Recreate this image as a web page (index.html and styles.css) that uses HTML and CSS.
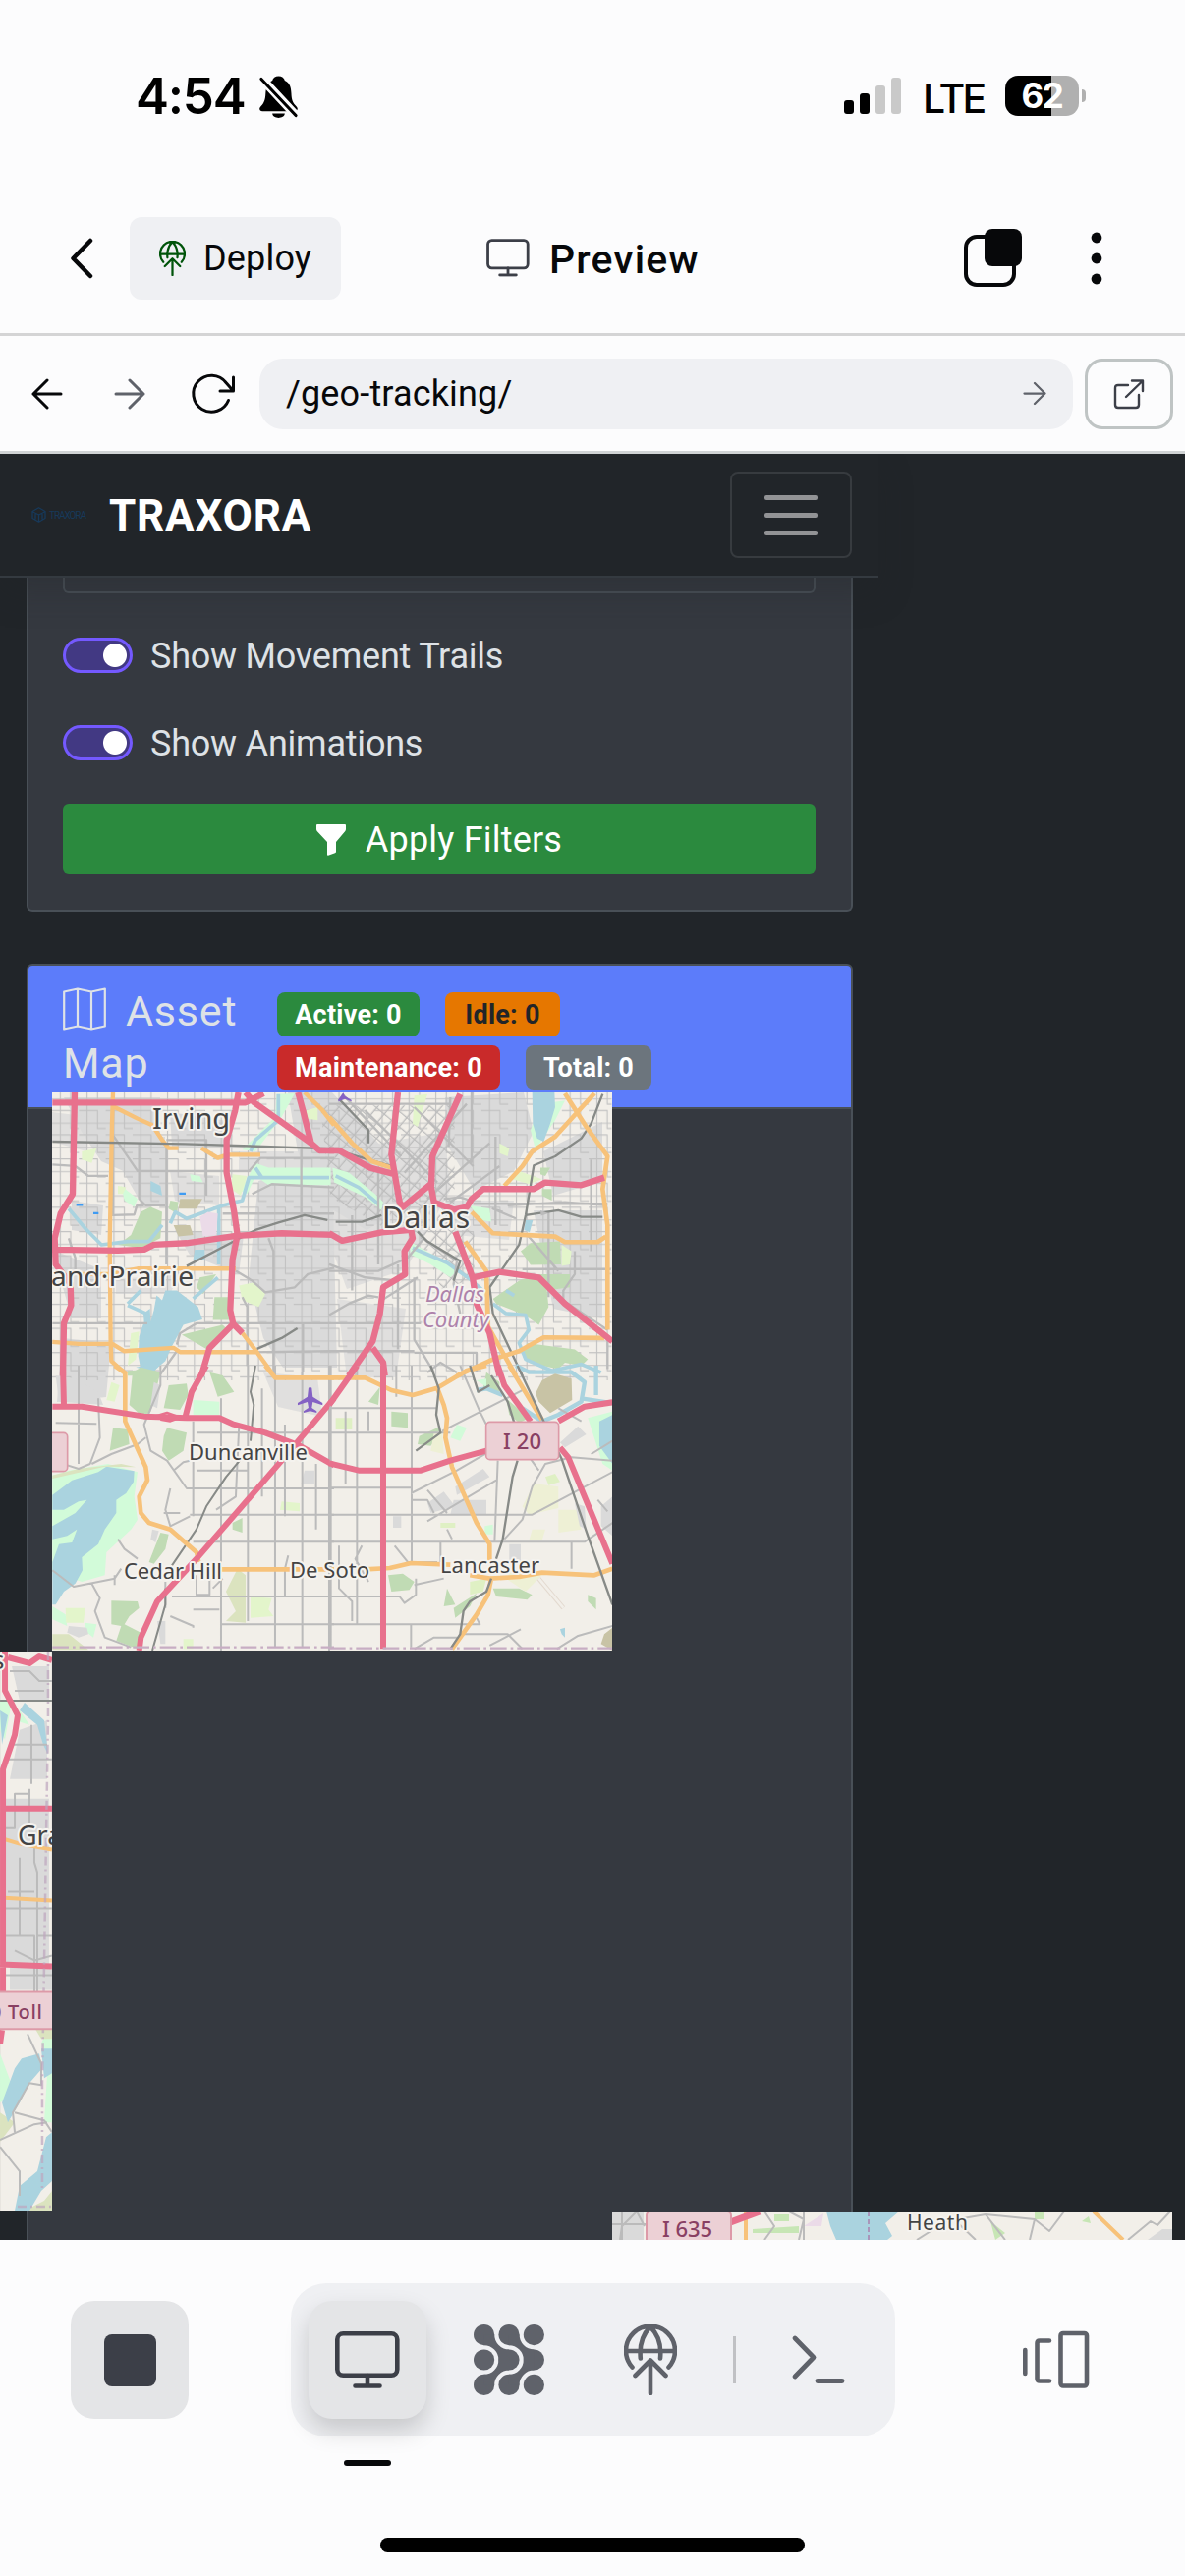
FILE: index.html
```html
<!DOCTYPE html>
<html lang="en">
<head>
<meta charset="utf-8">
<title>Preview</title>
<link rel="stylesheet" href="styles.css">
</head>
<body>
<svg class="defs" width="0" height="0" aria-hidden="true">
  <defs>
    <symbol id="monitor" viewBox="0 0 66 58"><rect x="2.3" y="2.3" width="61" height="42.500" rx="6"/><path d="M33 45v10M20.500 55.500h25" /></symbol>
    <symbol id="deploy" viewBox="0 0 54 72"><path d="M8.500 43.500A25 25 0 1 1 45.500 43.500M2 27h50M16.800 34.500Q15 14 26.800 2.500Q39 14 37 34.500M27 70V36.500M11.500 52 27 36.500 42.500 52"/></symbol>
    <symbol id="arrow" viewBox="0 0 32 32"><path d="M2 16h28M16 2l14 14-14 14"/></symbol>
    <pattern id="streets" width="82" height="74" patternUnits="userSpaceOnUse"><path d="M0 20H82M25 0V74M57 0V36H82M0 55H57V74" fill="none" stroke="#c2c2c2" stroke-width="3.500"/></pattern>
    <pattern id="diagonal" width="30" height="36" patternUnits="userSpaceOnUse" patternTransform="rotate(40)"><path d="M0 10H30M10 0V36" fill="none" stroke="#bdbdbd" stroke-width="4"/></pattern>
  </defs>
</svg>

<header class="statusbar">
  <div class="clock">4:54</div>
  <svg class="bell" viewBox="0 0 40 44"><path d="M20 0c-3.500 0-6 2-6.500 4.500C8 7 7 12 6.500 18c-.4 7-1.500 10-5 13.500C-1 34 .5 36.500 3 36.500h34c2.500 0 4-2.500 1.500-5C34.500 28 33.500 24 33.300 18 33 12 32 7 26.500 4.500 26 2 23.500 0 20 0zM13.500 39h13c-.5 6-12.500 6-13 0z"/><path d="M-1-1 42 45" stroke="#fcfcfd" stroke-width="9"/><path d="M2 3 38 41" stroke="#000" stroke-width="3.200" stroke-linecap="round"/></svg>
  <div class="status-right">
    <svg class="signal" viewBox="0 0 58 37"><rect y="23" width="10" height="14" rx="3"/><rect x="16" y="16" width="10" height="21" rx="3"/><g fill="#c9c9c9"><rect x="32" y="8" width="10" height="29" rx="3"/><rect x="48" width="10" height="37" rx="3"/></g></svg>
    <div class="network">LTE</div>
    <div class="battery">62</div>
    <div class="battery-tip"></div>
  </div>
</header>

<div class="titlebar">
  <svg class="back" viewBox="0 0 22 40"><path d="M20 2 2.500 20 20 38"/></svg>
  <button class="deploy"><svg viewBox="0 0 54 72"><use href="#deploy"/></svg><span>Deploy</span></button>
  <div class="title"><svg viewBox="0 0 66 60"><use href="#monitor" width="66" height="58"/></svg><span>Preview</span></div>
  <svg class="tabs" viewBox="0 0 60 60"><rect x="2" y="8" width="49" height="49" rx="11" fill="none" stroke="#07080a" stroke-width="4"/><rect x="21" y="0" width="38" height="38" rx="8" fill="#07080a"/></svg>
  <svg class="more" viewBox="0 0 12 54"><circle cx="6" cy="6" r="5.400"/><circle cx="6" cy="27" r="5.400"/><circle cx="6" cy="48" r="5.400"/></svg>
</div>

<nav class="addressbar">
  <svg class="nav-prev" viewBox="0 0 32 32"><use href="#arrow"/></svg>
  <svg class="nav-next" viewBox="0 0 32 32"><use href="#arrow"/></svg>
  <svg class="reload" viewBox="0 0 46 42"><path d="M38.500 27.500A18.500 18.500 0 1 1 36 9.500l7 8M43.500 4v14H30"/></svg>
  <div class="url"><span>/geo-tracking/</span><svg viewBox="0 0 32 32"><use href="#arrow"/></svg></div>
  <button class="open"><svg viewBox="0 0 30 30"><path d="M14 6H4Q1 6 1 9V26Q1 29 4 29H22Q25 29 25 26V16M18 1.500H29V12M28.500 2 12 18"/></svg></button>
</nav>

<main class="site">
  <div class="navbar">
    <svg class="logo" viewBox="0 0 56 16"><path d="M7.500.8 14 4.500v7L7.500 15.200 1 11.500v-7zM1.500 5 7.500 8 13.500 5M7.500 8v7M4 7v5M11 7v5"/><text x="18" y="11.700" textLength="38">TRAXORA</text></svg>
    <div class="brand">TRAXORA</div>
    <div class="toggler"><i></i><i></i><i></i></div>
  </div>

  <section class="card filters">
    <div class="input-end"></div>
    <label class="check first"><span class="switch"></span><span class="label">Show Movement Trails</span></label>
    <label class="check second"><span class="switch"></span><span class="label">Show Animations</span></label>
    <button class="apply"><svg viewBox="0 0 30 31"><path d="M1 0h28q1 0 1 1v4q0 1-.7 2L20 18v10q0 1-1 1.300l-7 2.500q-1 .2-1-1V18L.7 7Q0 6 0 5V1q0-1 1-1z"/></svg><span>Apply Filters</span></button>
  </section>

  <section class="card assets">
    <div class="card-header">
      <h5><svg viewBox="0 0 44 44"><path d="M1.200 4.500 15 1.500 29 4.500 42.800 1.500v38L29 42.500 15 39.500 1.200 42.500zM15 1.500v38M29 4.500v38"/></svg>Asset<br>Map</h5>
      <div class="badges"><span class="badge active">Active: 0</span><span class="badge idle">Idle: 0</span><span class="badge maint">Maintenance: 0</span><span class="badge total">Total: 0</span></div>
    </div>
  </section>

  <svg class="tile tile-main" viewBox="0 0 570 568">
    <rect width="570" height="568" fill="#f2efe9"/>
    <!-- built-up areas and street grids -->
    <g fill="#dadada">
      <path d="M12 5H110V60L95 90 50 70 30 40zM62 45H115V115H92L72 80zM120 20 185 30 182 55H122zM125 140 195 145 190 185 140 165zM210 90 285 70 290 280H235L215 250 200 190zM20 110 52 115 50 145 20 140zM0 160 50 180V230H20zM10 250 60 255 55 310 5 315zM240 0H285L340 60 355 120 320 140 270 110 250 60zM400 5 480 0 490 40 470 80 430 100 400 50zM500 60 560 30V90L510 105zM490 120H560V230L510 220zM220 200 285 205V280H240z"/>
      <path d="M285 60 400 40 405 100 360 180 300 200 285 160zM290 210 360 220 350 290H300zM120 80 170 85V115L125 110zM190 60H280V80H190zM65 190 130 185 120 205H65zM400 110 470 110 465 150 410 145zM215 285 270 290 275 330 230 320zM0 20 40 25 35 60 0 50z" opacity=".75"/>
    </g>
    <g transform="scale(.333)"><path d="M0 0H1710V880H0z" fill="url(#streets)"/><path d="M820 40H1230V390L1170 430 1010 410 850 320zM1110 410H1290V570L1190 600z" fill="url(#diagonal)"/></g>

    <!-- north-west quarter -->
    <g transform="translate(-13 -11.700) scale(.3333)">
      <g fill="#d2fbd9"><path d="M660 250 700 265H890V318H700L660 290 635 345 615 335zM725 40 780 38 740 110 660 215 620 210 720 110zM250 320 300 360 290 385 260 365zM460 285 490 290 500 310 465 305z"/></g>
      <g fill="#c0dbb4"><path d="M240 500 280 470 310 400 340 385 375 400 370 480 310 510zM435 775 560 745 575 760 510 818zM535 660H585V730H530zM400 365 425 370 420 405 395 390zM490 600 540 590 500 650 480 630zM270 885 350 880 370 900H270z"/></g>
      <g fill="#e3f5cb"><path d="M590 285 635 290 615 350 585 330zM610 625 655 615 690 650 670 690 620 670zM815 90 850 80 850 120 820 115zM130 215 175 205 160 250 130 240zM280 770 305 765 295 850 270 870zM240 320 265 325 255 345H240z"/></g>
      <g fill="#aad3df"><path d="M385 640H420L485 690 498 728 440 745 405 810 385 855 350 885 310 880 302 840 305 780 320 735 318 710 338 695 340 735 350 700 358 655 375 670zM340 305 370 320 375 350 340 335zM475 515H505V545H470z"/></g>
      <g fill="none" stroke="#aad3df" stroke-width="11"><path d="M90 390 140 450 190 500 270 490 335 490 375 440M400 435 415 400 450 420 560 380 620 365 640 295H885M548 385V560M645 215 660 180 730 120V40M660 265 680 295M470 665 545 600M270 685 325 710M270 680 310 640"/></g>
      <path d="M430 360H498L480 390H425zM410 440 460 440 470 470 425 475z" fill="#c8c3a5"/><path d="M490 415 515 400 545 405 540 470 500 475z" fill="#ebdbe8"/>
      <path d="M427 344H447M113 378H133M165 404H181" stroke="#3f9bf2" stroke-width="7"/>
      <g fill="none" stroke="#bbb" stroke-width="7"><path d="M388 205V560M305 190V360L325 380H384M225 90V410L290 408 298 380 320 380M40 255 110 260 150 290H210M388 180H510V350M225 165 300 275H640L675 235H900M650 345 710 315 900 325M560 405H900M700 480 715 520V890M600 580 650 610 690 645 780 630 820 590 900 570M800 210V460M40 740H330M420 805 430 770 480 740H890M370 895 420 825 490 830 890 825M90 480 110 540V590M805 740V890M620 660 635 690V870"/></g>
      <g fill="none" stroke="#f7c27a" stroke-width="13"><path d="M225 35 222 130 215 500 218 800 260 825 410 815 430 828H665L620 770M218 800 220 855 265 895M220 75 300 115 345 135 375 180 395 205H425M495 205 545 235 575 225H675M810 35 865 90 900 135M130 590H215L300 573H600M40 797 120 803H220M655 815 715 898"/></g>
      <g fill="none" stroke="#878a87" stroke-width="7"><path d="M40 185 445 192 900 207M450 565 660 455 730 432 810 410 880 425M665 818 740 785 788 755"/></g>
      <g fill="none" stroke="#e8718d" stroke-width="19"><path d="M108 35 102 345 65 405 47 480 50 560 95 620 97 685 75 740 72 900M40 66H600L630 66 685 38M608 35 598 90 572 180V280L595 400 605 470 590 545 583 700 592 742 520 815 495 900M630 35 655 65 830 190 855 212H900M790 35 805 90 830 190M40 515 240 518 320 515 350 500 450 495 600 473 740 465 895 470M592 742 620 770"/></g>
    </g>

    <!-- north-east quarter -->
    <g transform="translate(282 -11.700) scale(.3333)">
      <g fill="#d2fbd9"><path d="M10 265 60 280 140 345 165 370 160 395 110 355 15 310zM245 490 290 515 350 550 390 580 370 600 310 560 250 530zM430 380 490 390 495 430 460 425zM645 70 720 60 690 120 630 210 615 150z"/></g>
      <g fill="#c0dbb4"><path d="M615 495 705 490 708 560 615 562 585 520zM580 610 640 590 735 590 735 630 665 640 670 690 640 745 605 720 560 700 510 680 500 665zM605 800 750 820 790 850 770 870 720 860 700 880 610 860 590 830zM645 265 675 265 660 290 645 285zM650 330H680V365L650 350z"/></g>
      <g fill="#e3f5cb"><path d="M520 190 550 205 545 230 520 220zM580 275 650 300 610 315 560 300zM710 500 740 520 735 560 710 565zM260 45 300 40 270 140 255 130z"/></g>
      <path d="M620 35H688L690 80 675 130 655 185 635 175 622 130zM600 425H622L612 462 595 455z" fill="#aad3df"/>
      <g fill="none" stroke="#aad3df" stroke-width="11"><path d="M20 290 90 325 150 375M255 510 360 555 430 605 470 640M500 680 540 710 600 715 610 760 580 800 600 850 680 885 770 865 830 890M540 640 565 655"/></g>
      <g fill="none" stroke="#bbb" stroke-width="7"><path d="M0 70H370M435 35V250M508 170V440M370 50 365 200M40 40 220 230M110 90 330 310M260 80 440 260M230 280 420 70M300 360 490 190M370 370 520 260M440 375H850M545 380 720 370 850 380M670 400V660M605 470 700 580M800 240V520M590 575H860M750 520V590L715 640V670L850 760M0 580H150L240 540 290 480M210 560V820M260 600V790L320 890M0 740H280M0 825H260M150 280V560M70 410V640M300 490 390 550 380 620 400 710M260 830H450V890M850 780V880M300 890 340 860 390 890M570 420 500 390 530 400"/></g>
      <path d="M350 360 400 355 430 365M160 670 270 600M0 715 60 680 120 655 150 660M0 560 110 600 210 610" fill="none" stroke="#bbb" stroke-width="7"/>
      <g fill="none" stroke="#878a87" stroke-width="7"><path d="M20 430 100 430 160 410M0 205 190 260M835 40 800 130 770 175 690 230 625 258 600 410 580 500 490 630 500 710 590 900M600 410 700 395 770 415H835M270 460 300 490 400 550 380 610M30 55 120 150V190"/></g>
      <g fill="none" stroke="#f7c27a" stroke-width="14"><path d="M0 110 70 190 130 245 190 265M535 320 590 260 620 215 690 170 810 38M720 38 785 140 850 230 835 330 850 440V760M435 400 500 465 690 475 720 492H820L845 475M415 490 480 580 485 750 570 900M390 900 500 850 580 825 655 783 840 785"/></g>
      <g fill="none" stroke="#e8718d" stroke-width="19"><path d="M210 35 190 225 215 370 225 385 310 315 320 370 380 393 420 385 435 360 470 330H625L660 310 770 318 840 295M400 40 315 230 312 320M0 212H30L125 265 200 285M0 465 40 488 160 462 250 455 255 480 230 520 232 590 165 630 155 710 133 795 60 900M133 815 165 860 170 900M385 460 400 500 438 600 520 583 640 600 720 680 865 795M438 600 450 680 490 770 520 900"/></g>
      <path d="M43 36 48 46 68 58V63L48 55 28 63V57z" fill="#8461c4"/>
      <path d="M645 395 670 404 647 412z" fill="#bbb"/>
    </g>

    <!-- south-west quarter -->
    <g transform="translate(-13 278) scale(.3333)">
      <path d="M40 335 90 320 210 300 300 325 290 400 300 470 280 500 205 570 200 640 130 660 40 630zM40 735 80 760 85 795 40 775zM470 105 550 110V150H470zM140 785 175 790 165 830 140 810z" fill="#d2fbd9"/>
      <path d="M40 395 100 350 180 325 205 308 290 322 288 355 265 390 235 410 235 450 200 500 180 545 130 585 132 625 110 665 75 690 50 730H40V600L60 545 100 540 115 500 85 520 40 530V490L110 450 145 410 120 415 75 440 40 440zM295 5 320 0H365L350 18 320 12z" fill="#aad3df"/>
      <g fill="#c0dbb4"><path d="M285 20 310 5 370 20 340 140 315 155 275 120zM395 60 450 55 455 90 430 135 380 130zM225 190 270 195 275 240 215 260zM390 190 450 205 440 260 395 290 375 260 380 215zM220 718 300 720 305 740 275 765 260 790 310 815 300 865 235 840 250 795 220 790zM520 20 560 30 595 80 545 95zM370 510 395 515 385 560 350 605 335 600zM590 480 620 465 620 510 590 500z"/></g>
      <g fill="#e3f5cb"><path d="M220 50 245 60 230 110 205 105zM80 740 140 740 135 785H82zM740 415 795 420 795 445 735 440zM645 705 710 710 700 745 715 765 645 770zM440 835H470V865H440z"/></g>
      <path d="M40 820 90 820 150 868H40zM605 620 630 640V785L570 780 600 750 570 690zM40 335 120 315 250 300 295 310 200 308 40 345z" fill="#dbe3bf"/>
      <path d="M50 30 110 40 180 80 195 120 60 110zM345 500 365 505 355 540 340 530zM360 780H385V850H370zM90 795 145 800 150 820 120 830 85 815zM350 50 370 60 360 130 340 120zM810 320H840V360H800z" fill="#dadada"/>
      <g fill="none" stroke="#bbb" stroke-width="6"><path d="M370 0V60L320 180 340 260 390 290 450 375H900M120 0V300M180 100 185 220 155 300 120 315 40 290M50 175 175 178M160 300 220 270 300 240 325 220M410 320 440 295 460 290M400 375 385 440 400 490 460 460M555 100V870M637 0V780M720 0V860M803 20V860M885 0V870M470 170V460M380 450H430M480 320H640M460 455H900M470 538H900M40 625 105 675 230 650 250 620M160 665 185 710 170 750 200 830 280 860M230 640V670M385 660V740M405 705H900M400 765 470 795V800M555 790H900M470 745H550M560 650 530 680M240 530 260 560 300 590M480 205H890M680 70V400M750 180V460M845 300V500M480 640V700H520V650M610 180 600 400 540 440M760 580 750 620V705"/></g>
      <g fill="none" stroke="#878a87" stroke-width="6"><path d="M660 0 645 80 655 120 645 230M620 280 570 340 510 430 480 500 405 610M385 680V730L365 800 345 870"/></g>
      <g fill="none" stroke="#f7c27a" stroke-width="14"><path d="M230 0 262 22V170L325 310 330 350 305 400 310 450 335 480 400 500 480 570 487 600M555 622H900M690 0 720 37H900"/></g>
      <g fill="none" stroke="#e8718d" stroke-width="18"><path d="M72 0 75 122M40 125 130 125 320 155 450 160H550L590 178 690 205 795 245 900 305M510 0 465 80 445 160M900 100 740 290 480 590 360 720 310 830 305 870"/><path d="M350 156 390 144 430 158 400 169 370 164" stroke-width="8"/></g>
      <rect x="-20" y="205" width="106" height="118" rx="12" fill="#ecd0d5" stroke="#dd9aa8" stroke-width="5"/>
      <path d="M822 68q5-4 10 0l3 27 30 19v7l-30-10-3 18 15 10v5l-20-5-20 5v-5l15-10-3-18-30 10v-7l30-19z" fill="#8461c4"/>
      <path d="M40 860H900" stroke="#c7adc3" stroke-width="7" stroke-dasharray="50 12 8 12"/>
    </g>

    <!-- south-east quarter -->
    <g transform="translate(282 278) scale(.3333)">
      <g fill="#c0dbb4"><path d="M190 140 240 145V190L190 185zM275 215 340 185 335 215 310 245 270 240zM180 640 225 635 260 660 245 685 190 690zM120 110 155 65 150 120zM500 680 580 680 620 700 605 715 510 705zM380 740 450 695 430 735 385 770zM480 20 520 50 520 90 470 70zM540 100 610 160 580 175 550 150zM360 680 385 730 350 735zM790 700 815 710V745L790 720z"/></g>
      <g fill="#eef0d5"><path d="M625 360 700 370 700 435 610 455 590 430zM700 440H755L770 500 700 510zM620 500 660 500 650 535H610zM560 620 650 640 600 690 540 650zM320 205 345 200 350 270 310 260z"/></g>
      <path d="M20 160H70V195H20zM660 340 690 330 705 355 670 365zM340 480H385V495H340zM430 660 480 650 470 690 430 700z" fill="#dff0c4"/>
      <path d="M390 180 420 190 400 230 370 220zM475 490 500 485 500 515 475 515zM790 160 865 140V320L835 300zM450 45 480 40 480 65z" fill="#d2fbd9"/>
      <path d="M825 170 865 150V300L825 245zM705 805 720 800 720 830 710 820z" fill="#aad3df"/><path d="M570 0 610 20 680 20 740 20 780 50 770 110 700 150 650 170 590 130M450 75 480 70 530 90M770 100 865 115M815 0V90" fill="none" stroke="#aad3df" stroke-width="13"/>
      <path d="M650 45 690 25 740 40 742 105 675 145 640 110 630 85zM840 820 865 800V870L830 850z" fill="#c8c3a5"/>
      <path d="M705 235 760 185 785 210 720 250zM385 370 470 315 490 340 390 395zM300 420 350 385 385 430 310 450zM380 410H480V455H370zM195 460H220V495H195zM550 545H585V600H550zM750 420 780 430 785 500 765 490zM830 430 865 400V520L830 490z" fill="#dadada"/>
      <g fill="none" stroke="#bbb" stroke-width="6"><path d="M85 0V790M5 0V865M252 0V600M205 0V95M0 130H330M0 205H370M0 373H250M0 455H620L865 325M0 538H780L865 480M0 705H215L230 725 265 700V650M0 790H460L450 770M250 390 390 320 510 250M345 200 600 70M300 475 510 350M515 290 505 540M300 380 360 450M535 530 590 470 620 370 660 300 740 280 865 290M260 865 320 830H390M410 820H545L590 865M695 865 760 825 865 795M490 855 585 805M340 540V600M740 540V620M250 410H300L320 450M120 140V200M50 140V360M30 550V680L70 720V780M100 550 80 590 120 660M200 550 240 600 330 600M260 670 350 650M250 790V860M360 500 375 530M590 250 640 320M400 0 460 140 480 180M820 410 850 445M700 130 770 170M865 230 800 270"/></g>
      <g fill="none" stroke="#f7c27a" stroke-width="14"><path d="M0 37H110L190 75 255 90 330 68 420 15 480 0M330 68 350 120 360 160 355 220 375 310 450 480 490 545V600M110 622 185 618 250 603 370 608M430 640 490 650 580 645 650 632 810 640 865 620M495 650 485 700 450 760 375 865M550 0 650 165"/></g>
      <g fill="none" stroke="#878a87" stroke-width="7"><path d="M310 0 335 70 327 150 340 205 265 260M430 0 455 80 490 60M495 30 545 110 570 190M575 290 560 340 530 530 510 590M495 650 480 690 430 720 410 750 400 820 370 865M575 0 660 180 710 285 790 520 865 730"/></g>
      <g fill="none" stroke="#e8718d" stroke-width="18"><path d="M165 0V865M0 120 85 0M0 298 90 320H280L370 290 480 260M515 0 535 60 615 170M700 170 780 125 865 112M705 250 730 280 865 605"/></g>
      <rect x="479" y="172" width="222" height="115" rx="12" fill="#ecd0d5" stroke="#dd9aa8" stroke-width="5"/>
      <path d="M640 650 715 740" stroke="#e3d9cf" stroke-width="14"/><path d="M640 650 715 740" stroke="#f2efe9" stroke-width="8"/>
      <path d="M0 863H865" stroke="#c7adc3" stroke-width="7" stroke-dasharray="50 12 8 12"/>
    </g>

    <g class="map-label">
      <text x="102" y="37" font-size="29" textLength="79">Irving</text>
      <text x="-1" y="197" font-size="28" textLength="145">and·Prairie</text>
      <text x="336" y="138" font-size="30" textLength="89">Dallas</text>
      <text x="139" y="374" font-size="22" textLength="121">Duncanville</text>
      <text x="73" y="495" font-size="22" textLength="100">Cedar Hill</text>
      <text x="242" y="494" font-size="22" textLength="81">De Soto</text>
      <text x="395" y="489" font-size="22" textLength="101">Lancaster</text>
      <g class="county"><text x="380" y="213" textLength="60">Dallas</text><text x="377" y="239" textLength="68">County</text></g>
      <text class="shield" x="459" y="363" font-size="22" textLength="39">I 20</text>
    </g>
  </svg>

  <svg class="tile tile-west" viewBox="0 0 53 570">
    <rect width="53" height="570" fill="#f2efe9"/>
    <path d="M12 15H50V50H20zM20 80 48 70V130H10zM5 150H50V320H5zM10 320H53V345H10z" fill="#dadada"/>
    <path d="M0 50H12L5 90 0 80zM48 385H53V420L42 400zM0 410 15 450 0 460zM20 60 30 75 15 70zM50 400H53V480H45z" fill="#d2fbd9"/>
    <path d="M0 470 15 480 0 500zM45 560 53 550V570H25zM36 385 53 375V395H42z" fill="#dbe3bf"/>
    <path d="M15 425 22 415 40 410 43 425 30 440 20 460 8 480 2 460zM42 405H53V430L45 435zM47 495 53 490V540L42 550 30 570H15L20 545 38 530zM25 52 45 70 49 105 44 95 38 75 20 60zM0 60 8 65 2 95z" fill="#aad3df"/>
    <g fill="none" stroke="#bbb" stroke-width="2"><path d="M32 75V135M12 95H48M5 110H53M10 20H30L40 30H53M15 40H45M30 140V180M0 180H15V145H30M35 200V215L38 225V350M0 262H53M8 245H35M20 210V290M5 290H35V350M38 290H53M15 305 35 315 53 310M5 330H53M28 390 42 420V442L30 440 13 470 15 490M15 470 45 478 53 490M0 498 35 482 48 480M0 505 20 530V555"/></g>
    <path d="M0 50H53" stroke="#878a87" stroke-width="2"/>
    <path d="M0 190 20 196 53 202M0 251 53 254" fill="none" stroke="#f7c27a" stroke-width="4"/>
    <path d="M5 0 5 40 18 65 15 85 3 120V347M0 400 2 386M8 6 30 12 40 5 53 9M3 160H53M0 319 53 321" fill="none" stroke="#e8718d" stroke-width="6"/>
    <path d="M49 0V70L47 190 45 320 43 440V550M18 566H53" fill="none" stroke="#bda5bd" stroke-width="2.500" stroke-dasharray="9 4 2 4" opacity=".7"/>
    <rect x="-10" y="347" width="70" height="38" fill="#ecd0d5" stroke="#dd9aa8" stroke-width="2"/>
    <g class="map-label"><text x="18" y="197" font-size="27">Gra</text><text x="-8" y="18" font-size="26" textLength="10">s</text><text class="shield" x="-10" y="375" font-size="20" textLength="53">0 Toll</text></g>
  </svg>

  <svg class="tile tile-east" viewBox="0 0 570 29">
    <rect width="570" height="29" fill="#f2efe9"/>
    <path d="M0 0H32V29H0zM545 29 560 18H570V29z" fill="#dadada"/>
    <path d="M218 0H292L278 12 285 25 280 29H228L222 15z" fill="#aad3df"/><path d="M195 15 215 2 213 15z" fill="#ebdbe8"/>
    <path d="M143 18 190 15V22H143zM385 10 400 22 390 29zM165 3H180V10H165zM478 10 485 5 487 12zM430 0H440V8H430z" fill="#c7e6b5"/>
    <g fill="none" stroke="#bbb" stroke-width="2"><path d="M0 13H35M8 29 10 15 25 0 33 15M10 0V29M155 0 165 15 155 29M180 0 195 8 190 29M195 0V29M310 29 340 10 380 3 430 8 445 20 460 0M380 3 400 29M350 10 370 29M430 8 425 29M525 29 548 10 555 14 568 0"/></g>
    <path d="M136 0V29M490 0 520 29" stroke="#f7c27a" stroke-width="4"/><path d="M115 13 150 0" stroke="#e8718d" stroke-width="7"/>
    <path d="M261 0V29" stroke="#a995ba" stroke-width="2" stroke-dasharray="5 3"/>
    <rect x="35" y="0" width="86" height="38" rx="4" fill="#ecd0d5" stroke="#dd9aa8" stroke-width="2"/>
    <g class="map-label"><text x="300" y="19" font-size="21" textLength="62">Heath</text><text class="shield" x="51" y="26" font-size="22" textLength="51">I 635</text></g>
  </svg>
</main>

<footer class="dock">
  <div class="dock-row">
    <button class="stop"><i></i></button>
    <div class="tools">
      <button class="tool selected"><svg class="t-monitor" viewBox="0 0 66 58"><use href="#monitor"/></svg></button>
      <svg class="t-apps" viewBox="0 0 72 72"><defs><path id="bridge" d="M21.200 10.600A14.800 14.800 0 0 0 36 25.400V36H25.400A14.800 14.800 0 0 0 10.600 21.200V10.600Z"/></defs><g><circle cx="10.600" cy="10.600" r="10.600"/><circle cx="36" cy="10.600" r="10.600"/><circle cx="61.400" cy="10.600" r="10.600"/><circle cx="10.600" cy="36" r="10.600"/><circle cx="36" cy="36" r="10.600"/><circle cx="61.400" cy="36" r="10.600"/><circle cx="10.600" cy="61.400" r="10.600"/><circle cx="36" cy="61.400" r="10.600"/><circle cx="61.400" cy="61.400" r="10.600"/></g><use href="#bridge"/><use href="#bridge" x="25.400"/><g transform="translate(0 72) scale(1 -1)"><use href="#bridge"/><use href="#bridge" x="25.400"/></g></svg>
      <svg class="t-deploy" viewBox="0 0 54 72"><use href="#deploy"/></svg>
      <span class="divider"></span>
      <svg class="t-shell" viewBox="0 0 54 50"><path d="M3 3 22 22.500 3 42M26 46.500H51"/></svg>
    </div>
    <svg class="t-switch" viewBox="0 0 68 60"><path d="M2.300 20V44M27 10.500H17Q14.500 10.500 14.500 13V49Q14.500 51.500 17 51.500H27"/><rect x="38.500" y="3" width="26.500" height="53.500" rx="2.500"/></svg>
  </div>
  <div class="marker"></div>
  <div class="home"></div>
</footer>
</body>
</html>
```
FILE: styles.css
```css
* { box-sizing: border-box; }
body { margin: 0; width: 1206px; height: 2622px; overflow: hidden; background: #fcfcfd; color: #07080a; font-family: Roboto, sans-serif; display: flex; flex-direction: column; }
svg { display: block; flex: none; overflow: visible; fill: none; stroke-linecap: round; stroke-linejoin: round; }
.defs { position: absolute; }
button { border: 0; padding: 0; font: inherit; color: inherit; display: flex; align-items: center; justify-content: center; flex: none; }

.statusbar { height: 195px; flex: none; display: flex; align-items: center; padding: 0 101px 0 138px; font-family: Inter, sans-serif; color: #000; }
.clock { font-size: 51px; font-weight: 600; width: 126px; letter-spacing: -1.2px; white-space: nowrap; }
.bell { width: 39px; height: 44px; fill: #000; margin-top: 2px; }
.status-right { margin-left: auto; display: flex; align-items: center; }
.signal { width: 58px; height: 37px; fill: #000; }
.network { font-size: 41px; font-weight: 500; letter-spacing: -2.8px; margin: 4px 0 0 22px; width: 84px; }
.battery { width: 75px; height: 41px; border-radius: 13px; background: linear-gradient(90deg, #000 47px, #b0b0b0 47px); color: #fff; font-size: 35px; font-weight: 700; line-height: 41px; text-align: center; letter-spacing: -1.5px; }
.battery-tip { width: 4px; height: 13px; margin-left: 3px; border-radius: 0 5px 5px 0; background: #b0b0b0; }

.titlebar { height: 147px; flex: none; border-bottom: 3px solid #d4d4d5; display: flex; align-items: center; padding: 0 84px 9px 72px; }
.back { width: 22px; height: 40px; margin-right: 38px; }
.back path { stroke: #07080a; stroke-width: 4.500; }
.deploy { width: 215px; height: 84px; border-radius: 12px; background: #eff0f3; font-size: 36px; gap: 18px; letter-spacing: .2px; }
.deploy svg { width: 27px; height: 36px; stroke: #00540a; stroke-width: 4.500; }
.title { display: flex; align-items: center; gap: 20px; margin-left: 148px; font-size: 41px; font-weight: 500; letter-spacing: 1.1px; }
.title span { padding-top: 2px; }
.title svg { width: 44px; height: 40px; stroke: #3c3f48; stroke-width: 4.200; }
.tabs { width: 60px; height: 60px; margin-left: auto; margin-right: 69px; }
.more { width: 12px; height: 54px; fill: #07080a; }

.addressbar { height: 120px; flex: none; border-bottom: 3px solid #d0d3d4; display: flex; align-items: center; padding: 0 12px 0 32px; stroke: #07080a; }
.nav-prev, .nav-next { width: 32px; height: 32px; stroke-width: 3; }
.nav-prev { transform: scaleX(-1); }
.nav-next { margin-left: 52px; stroke: #5f626a; }
.reload { width: 46px; height: 42px; margin: 0 24px 0 46px; stroke-width: 3; }
.url { width: 828px; height: 72px; border-radius: 24px; background: #eff0f3; display: flex; align-items: center; justify-content: space-between; padding: 0 27px; font-size: 36px; letter-spacing: .15px; }
.url svg { width: 24px; height: 25px; stroke: #5f626a; stroke-width: 3; }
.open { width: 90px; height: 72px; margin-left: 12px; border: 3px solid #bfc4c4; border-radius: 18px; background: none; }
.open svg { width: 30px; height: 30px; stroke: #3c3f48; stroke-width: 2.400; }

.site { height: 1818px; flex: none; position: relative; overflow: hidden; background: #212529; color: #dee2e6; }
.navbar { position: relative; width: 894px; height: 126px; display: flex; align-items: center; padding: 0 27px 0 32px; border-bottom: 2px solid #343a40; background: #212529; box-shadow: 0 16px 32px rgba(33, 37, 41, .3); }
.logo { width: 56px; height: 16px; stroke: #17395a; stroke-width: 1.300; }
.logo text { font: 10px Roboto, sans-serif; stroke: none; fill: #17395a; }
.brand { margin-left: 23px; padding-top: 2px; color: #fff; font-size: 44px; font-weight: 700; letter-spacing: .8px; }
.toggler { width: 124px; height: 88px; margin-left: auto; border: 2px solid #373b3f; border-radius: 8px; display: flex; flex-direction: column; align-items: center; justify-content: center; gap: 13px; }
.toggler i { width: 54px; height: 5px; border-radius: 2px; background: #929395; }
.card { width: 841px; margin-left: 27px; background: #353940; border: 2px solid #495057; }
.filters { height: 340px; border-top: 0; border-radius: 0 0 6px 6px; padding: 0 36px 0 35px; }
.input-end { height: 16px; border: 2px solid #495057; border-top: 0; border-radius: 0 0 6px 6px; }
.check { display: flex; align-items: center; gap: 18px; height: 36px; font-size: 36px; letter-spacing: -.22px; }
.label { padding-top: 2px; }
.first { margin-top: 45px; }
.second { margin-top: 53px; }
.switch { width: 71px; height: 36px; border-radius: 18px; border: 3px solid #7459ff; background: radial-gradient(circle at 50px 15px, #fff 11.500px, #423983 12.500px); }
.apply { width: 766px; height: 72px; margin-top: 44px; border-radius: 6px; background: #2b8a3e; color: #fff; font-size: 36px; gap: 20px; letter-spacing: .2px; }
.apply span { padding-top: 2px; }
.apply svg { width: 30px; height: 31px; fill: #fff; }
.assets { height: 1400px; margin-top: 53px; border-radius: 6px 6px 0 0; }
.card-header { height: 146px; padding: 20px 36px 0 35px; background: #5c7cfa; border-bottom: 2px solid #495057; border-radius: 4px 4px 0 0; display: flex; }
h5 { width: 218px; margin: 0; font-size: 43px; font-weight: 400; line-height: 53px; letter-spacing: .8px; }
h5 svg { display: inline-block; width: 44px; height: 44px; margin-right: 20px; vertical-align: -5px; stroke: #dee2e6; stroke-width: 2.200; }
.badges { width: 400px; display: flex; flex-wrap: wrap; align-content: flex-start; gap: 9px 26px; padding-top: 7px; }
.badge { height: 45px; border-radius: 8px; color: #fff; font-size: 27px; font-weight: 700; line-height: 46px; text-align: center; white-space: nowrap; letter-spacing: .25px; }
.active { width: 145px; background: #2b8a3e; }
.idle { width: 117px; background: #e67700; color: #212529; }
.maint { width: 227px; background: #c92a2a; }
.total { width: 128px; background: #6c757d; }

.tile { position: absolute; overflow: hidden; stroke-linecap: butt; }
.tile-main { left: 53px; top: 650px; width: 570px; height: 568px; }
.tile-west { left: 0; top: 1219px; width: 53px; height: 569px; }
.tile-east { left: 623px; top: 1789px; width: 570px; height: 29px; }
.map-label { font-family: "Noto Sans", sans-serif; fill: #444; stroke: #f5f3ef; stroke-width: 4px; paint-order: stroke; }
.county { fill: #ad82aa; font-size: 22px; font-style: italic; }
.shield { fill: #894063; stroke: none; font-weight: 500; }

.dock { flex: 1; position: relative; padding-top: 44px; display: flex; flex-direction: column; }
.dock-row { display: flex; align-items: center; padding: 0 97px 0 72px; }
.stop, .tool { width: 120px; height: 120px; border-radius: 24px; background: #e4e5e7; }
.stop i { width: 53px; height: 53px; border-radius: 8px; background: #3c3f48; }
.tools { width: 615px; height: 156px; margin-left: 104px; padding-left: 18px; border-radius: 36px; background: #eff0f3; display: flex; align-items: center; stroke: #5f626a; }
.selected { box-shadow: 0 12px 24px rgba(0, 0, 0, .17); }
.t-monitor { width: 66px; height: 58px; stroke: #3c3f48; stroke-width: 4.600; }
.t-apps { width: 72px; height: 72px; margin-left: 48px; fill: #5f626a; stroke: none; }
.t-deploy { width: 54px; height: 72px; margin-left: 81px; stroke-width: 4.600; }
.divider { width: 3px; height: 48px; margin-left: 57px; background: #c0c1c4; }
.t-shell { width: 54px; height: 50px; margin-left: 57px; stroke-width: 4.800; }
.t-switch { width: 68px; height: 60px; margin-left: auto; stroke: #5f626a; stroke-width: 4.600; }
.marker { width: 48px; height: 6px; margin: 24px 0 0 350px; border-radius: 3px; background: #07080a; }
.home { width: 432px; height: 15px; margin: 73px auto 0; border-radius: 8px; background: #000; }
```
